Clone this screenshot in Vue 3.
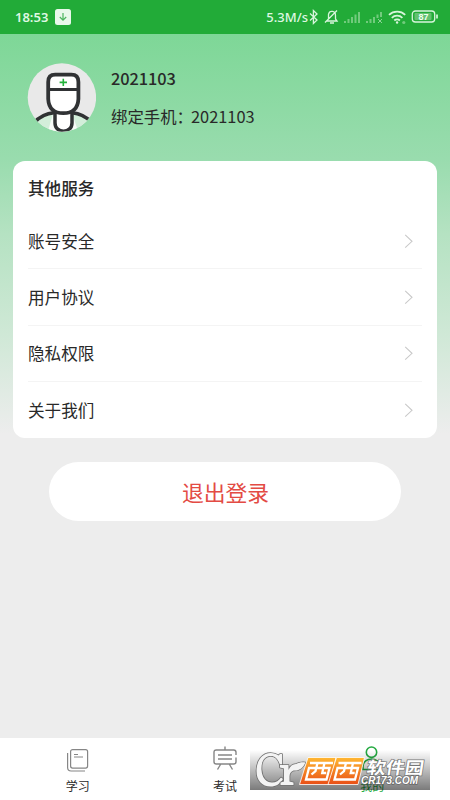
<script setup>
const services = ['账号安全', '用户协议', '隐私权限', '关于我们']
</script>

<template>
  <div class="screen">
    <header class="status">
      <span class="time">18:53</span>
      <svg class="download" width="16" height="16" viewBox="0 0 16 16">
        <rect width="16" height="16" rx="2.5" fill="#e9f8eb" />
        <path d="M8 4v7M4.8 8L8 11.2 11.2 8" fill="none" stroke="#4cb45e" stroke-width="1.2" />
      </svg>
      <span class="speed">5.3M/s</span>
      <svg class="signals" width="132" height="20" viewBox="0 0 132 20" fill="none" stroke="#d8f5dc" stroke-width="1.3">
        <path d="M1 6.5l7 6.5-3.6 3.5V3.5L8 7l-7 6.5" />
        <path d="M17.5 14h10.5l-1.5-2V8.5c0-5-6-5.5-7-1.2V12zM21 16h4M16 15.5L28 3.5" />
        <g stroke="none" fill="#72cb7d">
          <path d="M35 14h2v2h-2zM38.5 12h2v4h-2zM42 10h2v6h-2zM45.5 7.5h2V16h-2zM49 5h2v11h-2z" />
          <path d="M57 14h2v2h-2zM60.5 12h2v4h-2zM64 10h2v6h-2zM67.5 7.5h2V11h-2zM71 5h2v5h-2z" />
        </g>
        <path d="M69 12l4 4M73 12l-4 4" stroke="#8ad494" stroke-width="1" />
        <path d="M80 7.8c4.6-4.3 11.8-4.3 16.2 0M82.8 10.8c3-2.8 7.6-2.8 10.6 0M85.3 13.5c1.6-1.6 4-1.6 5.6 0" stroke-width="1.8" />
        <circle cx="88.1" cy="15.5" r="1.2" fill="#d8f5dc" stroke="none" />
        <circle cx="94.8" cy="15.5" r="1.6" fill="#72cb7d" stroke="none" />
        <rect x="103.3" y="4" width="22.4" height="11" rx="3" />
        <rect x="105.5" y="6" width="17" height="7" rx="1" fill="#64c170" stroke="none" />
        <path d="M128 7.5v4" stroke-width="1.7" />
        <text x="114.5" y="13" text-anchor="middle" class="charge">87</text>
      </svg>
    </header>

    <main class="content">
      <section class="profile">
        <svg class="avatar" width="69" height="69" viewBox="0 0 69 69">
          <defs><clipPath id="round"><circle cx="34.9" cy="34.5" r="34.2" /></clipPath></defs>
          <g clip-path="url(#round)">
            <rect width="69" height="69" fill="#e9e9e9" />
            <path d="M9 57q9-8 19-8h17q10 0 19 8l-9 12H17z" fill="#d3eeda" />
            <path d="M26 51q-4 13-5 18h30q-1-5-6-18z" fill="#f8fbf8" />
            <path d="M7 60q7-9 21-10.5M65 60q-7-9-21-10.5" fill="none" stroke="#303234" stroke-width="3.5" />
            <path d="M28 48v12c0 11 17 11 17 0V48" fill="#fff" stroke="#303234" stroke-width="3.5" />
            <path d="M21.2 19q0-7.3 7-7.3h16.2q7 0 7 7.3v17q-.8 14.2-15.1 14.2T21.2 36z" fill="#fff" stroke="#303234" stroke-width="3.8" />
            <path d="M21 26.5h30" stroke="#303234" stroke-width="3" />
            <path d="M36.3 15.7v7.4M32.6 19.4H40" stroke="#24b33c" stroke-width="1.6" />
          </g>
        </svg>
        <div class="identity">
          <div class="name">2021103</div>
          <div class="phone">绑定手机：<span class="number">2021103</span></div>
        </div>
      </section>

      <section class="card">
        <h2>其他服务</h2>
        <div v-for="item in services" :key="item" class="row">
          <span>{{ item }}</span>
          <svg width="10" height="16" viewBox="0 0 10 16"><path d="M1.2 1.8L8 8.3l-6.8 6.4" fill="none" stroke="#c9c9c9" stroke-width="1.1" /></svg>
        </div>
      </section>

      <button class="logout">退出登录</button>
    </main>

    <nav class="tabs">
      <div class="tab">
        <svg width="26" height="28" viewBox="0 0 26 28" fill="none" stroke="#868686" stroke-width="1.2">
          <rect x="5.6" y="3.6" width="17" height="18.5" rx="2" />
          <path d="M2.6 7v14.5q0 3.5 3.5 3.5H20" />
          <path d="M9 8.5h4M9 11h9" stroke-width="1" />
        </svg>
        <span>学习</span>
      </div>
      <div class="tab">
        <svg width="26" height="28" viewBox="0 0 26 28" fill="none" stroke="#868686" stroke-width="1.4">
          <path d="M13 .5v3M24 9V6.3Q24 4 21.7 4H4.3Q2 4 2 6.3v9.4Q2 18 4.3 18h17.4q2.3 0 2.3-2.3v-4.2M6 9h14M6 13h14M8.5 18.5l-3 5M17.5 18.5l3 5" />
        </svg>
        <span>考试</span>
      </div>
      <div class="tab active">
        <svg width="26" height="28" viewBox="0 0 26 28" fill="none" stroke="#25aa42" stroke-width="1.6">
          <circle cx="12.5" cy="6.2" r="5.2" />
          <path d="M4 23.5v-3C4 10.5 21 10.5 21 20.5v3z" />
        </svg>
        <span>我的</span>
      </div>
    </nav>

    <svg class="watermark" width="180" height="40" viewBox="0 0 180 40">
      <defs>
        <linearGradient id="shade" x2="0" y2="1"><stop stop-opacity="0" /><stop offset="1" stop-opacity=".52" /></linearGradient>
        <linearGradient id="orange" x2="0" y2="1"><stop stop-color="#ffb832" /><stop offset="1" stop-color="#e94e16" /></linearGradient>
      </defs>
      <rect width="180" height="40" fill="url(#shade)" />
      <g id="monogram" stroke="#707070" stroke-width="1.6" stroke-linejoin="round" fill="#f3f3f3" paint-order="stroke">
        <path d="M32 4v11h-2C28 8 24 5.500 20 6c-6 .7-9 6-8.500 14 .5 8 5 12.500 10.500 12.500 4 0 7-2 9-5l2 1.500C30 34 26 36.500 20.500 36.500 12 36.500 6.500 30.500 6.500 21 6.500 10.500 12.500 3 20.500 3c3.500 0 6 1 8 2.500L30 4z" />
        <path d="M30 15h8.500v5c1.500-4 4-6 7.500-6 3-1.500 6-2 9.500-1.500-2.500 5.500-6 8.500-12 8-2.500 1-4 3-4 6v5l4 1v2.500H30.500v-2.500l3.500-1V18.500l-4-1z" />
      </g>
      <g fill="url(#orange)" stroke="#fff" stroke-width=".8">
        <path d="M58 7.500h28l-6.500 27H49.500z" />
        <path d="M86.500 7.500h28l-6.500 27H78z" />
      </g>
      <g fill="none" stroke="#fff" stroke-width="2.300">
        <path d="M60 13h23M59 18h20.500l-3 11.500H56zM67.500 13l-2 8-4 3.500M74.500 13l-2.300 10h4" />
        <path d="M88.500 13h23M87.500 18H108l-3 11.500H84.500zM96 13l-2 8-4 3.500M103 13l-2.300 10h4" />
      </g>
      <g transform="translate(116 24) skewX(-9) scale(1 .9)"><text textLength="57" lengthAdjust="spacingAndGlyphs" class="brand">软件园</text></g>
      <text x="111" y="34" textLength="57" lengthAdjust="spacingAndGlyphs" class="domain">CR173.COM</text>
    </svg>
  </div>
</template>

<style>
body { margin: 0; overflow: hidden; }
</style>

<style scoped>
.screen {
  position: relative;
  width: 450px;
  height: 800px;
  box-sizing: border-box;
  display: flex;
  flex-direction: column;
  overflow: hidden;
  background: #ededed;
  color: #292929;
  font-family: "Noto Sans CJK SC", sans-serif;
}
.status {
  height: 34px;
  flex: none;
  display: flex;
  align-items: center;
  padding: 0 8px 0 15px;
  box-sizing: border-box;
  background: #22ab38;
  color: #dff8e2;
}
.time { width: 40px; font: 600 13px/20px "Noto Sans", sans-serif; white-space: nowrap; }
.speed { margin-left: auto; font: 500 13px/20px "Noto Sans", sans-serif; margin-right: 1px; }
.status svg { display: block; }
.signals { margin-right: 1px; }
.charge { font: 700 9px "Liberation Sans", sans-serif; fill: #effff0; stroke: none; }
.content {
  height: 704px;
  flex: none;
  display: flex;
  flex-direction: column;
  background: linear-gradient(#7ed797 0, #99dcae 125px, #b5e2c2 200px, #cfe8d6 300px, #ededed 400px);
}
.profile { display: flex; height: 127px; box-sizing: border-box; padding: 29px 27px; }
.avatar { flex: none; }
.identity { padding-left: 15px; line-height: 24px; font-size: 16.4px; }
.name { margin-top: 3px; font-weight: 500; letter-spacing: -.1px; }
.phone { margin-top: 14px; white-space: nowrap; }
.number { margin-left: -2px; }
.card {
  margin: 0 13px;
  height: 276.5px;
  box-sizing: border-box;
  padding: 0 15px;
  background: #fff;
  border-radius: 12px;
}
h2 { height: 52px; margin: 0; box-sizing: border-box; padding-top: 15px; font-size: 16.6px; line-height: 24px; font-weight: 500; }
.row {
  height: 56.25px;
  display: flex;
  align-items: center;
  justify-content: space-between;
  box-sizing: border-box;
  border-bottom: 1px solid #f4f4f4;
  font-size: 16.6px;
  line-height: 24px;
}
.row:last-child { border: 0; }
.row svg { margin-right: 8px; }
.logout {
  width: 352px;
  height: 59px;
  margin: 24.5px auto 0;
  padding: 0 0 0 1px;
  border: 0;
  border-radius: 30px;
  background: #fff;
  color: #e34b44;
  font: 400 21.8px/59px "Noto Sans CJK SC", sans-serif;
}
.tabs {
  height: 62px;
  flex: none;
  display: flex;
  padding: 0 4px;
  box-sizing: border-box;
  background: #fff;
}
.tab {
  flex: 1;
  display: flex;
  flex-direction: column;
  align-items: center;
  padding-top: 8px;
  font-size: 12px;
  line-height: 18px;
}
.tab span { margin-top: 3px; }
.active { color: #25aa42; }
.watermark { position: absolute; left: 250px; top: 750px; }
.brand { font: 700 19px "Noto Sans CJK SC", sans-serif; fill: #fff; stroke: #777; stroke-width: 1.5px; paint-order: stroke; }
.domain { font: italic 700 11px "Liberation Sans", sans-serif; fill: #fff; stroke: #666; stroke-width: 1.5px; paint-order: stroke; }
</style>
